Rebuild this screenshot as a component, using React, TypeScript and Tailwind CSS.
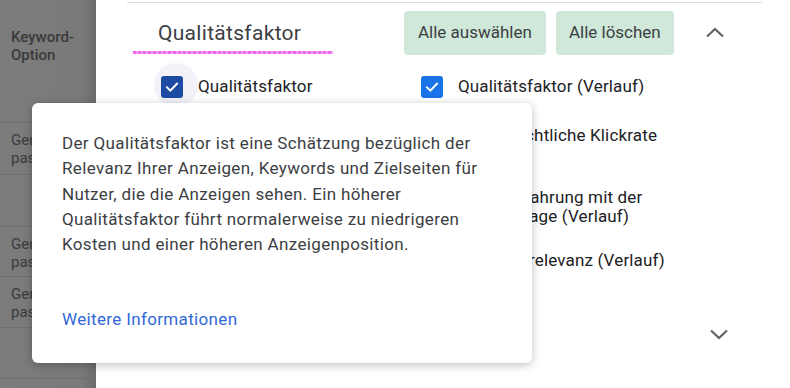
import React from "react";

const CheckIcon = () => (
  <svg viewBox="0 0 24 24" className="w-[16px] h-[16px]" fill="none">
    <path d="M4.5 12.5l5 5 10-10.5" stroke="white" strokeWidth="3" strokeLinecap="square" />
  </svg>
);

const Checkbox = ({ dark = false }: { dark?: boolean }) => (
  <div
    className={`w-[22px] h-[22px] rounded-[3px] flex items-center justify-center shrink-0 ${
      dark ? "bg-[#1d4aa3]" : "bg-[#1a73e8]"
    }`}
  >
    <CheckIcon />
  </div>
);

const Option = ({ label, dark = false, ripple = false }: { label: string; dark?: boolean; ripple?: boolean }) => (
  <div className="flex items-start gap-[15px]">
    <div className="relative w-[22px] h-[22px] shrink-0">
      {ripple && <div className="absolute -left-[7px] -top-[13px] w-[44px] h-[44px] rounded-full bg-[#f3f2f8]" />}
      <div className="relative">
        <Checkbox dark={dark} />
      </div>
    </div>
    <span className="text-[17px] leading-[19px] tracking-[0.15px] text-[#202124] max-w-[212px] pt-[1px]">{label}</span>
  </div>
);

const Chevron = ({ up = false }: { up?: boolean }) => (
  <svg viewBox="0 0 24 24" className="w-[24px] h-[24px]" fill="none">
    <path
      d={up ? "M4 15.5l8-7.5 8 7.5" : "M4 8.5l8 7.5 8-7.5"}
      stroke="#5f6368"
      strokeWidth="2.2"
    />
  </svg>
);

const panelRows = [
  { h: "h-[52px]", text: "Genau passend" },
  { h: "h-[52px]", text: "" },
  { h: "h-[50px]", text: "Genau passend" },
  { h: "h-[51px]", text: "Genau passend" },
  { h: "h-[51px]", text: "" },
  { h: "h-[51px]", text: "" },
];

export default function App() {
  return (
    <div className="relative w-[790px] h-[388px] overflow-hidden flex bg-white font-['Roboto',sans-serif]">
      {/* dimmed table behind the sheet */}
      <aside className="w-[96px] shrink-0 bg-gradient-to-r from-[#7c7c7c] via-[#7a7a7a] via-85% to-[#6b6b6b] text-[#3a3a3a] text-[15px] leading-[18px]">
        <div className="h-[123px] pl-[11px] pt-[28px] font-medium border-b border-[#6f6f6f]">
          Keyword-
          <br />
          Option
        </div>
        {panelRows.map((r, i) => (
          <div key={i} className={`${r.h} pl-[11px] pt-[8px] border-b border-[#6f6f6f] pr-2`}>
            {r.text}
          </div>
        ))}
      </aside>

      <main className="flex-1 flex flex-col">
        <div className="ml-[31px] w-[635px] h-px bg-[#dadce0] mt-[2px]" />

        <div className="flex items-start mt-[8px]">
          <div className="w-[308px] pl-[37px]">
            <div className="pl-[25px] pt-[10px] text-[21px] leading-[24px] tracking-[0.3px] text-[#3c4043]">
              Qualitätsfaktor
            </div>
            <div className="w-[200px] h-[3px] mt-[6px] bg-[repeating-linear-gradient(90deg,#f067ec_0,#f067ec_3px,#f59af2_3px,#f59af2_5px)]" />
          </div>
          <button className="h-[44px] px-[14px] rounded-[4px] bg-[#cfe8d9] text-[17px] text-[#3c4043]">
            Alle auswählen
          </button>
          <button className="h-[44px] px-[13px] ml-[10px] rounded-[4px] bg-[#cfe8d9] text-[17px] text-[#3c4043]">
            Alle löschen
          </button>
          <div className="ml-[29px] mt-[10px]">
            <Chevron up />
          </div>
        </div>

        <div className="grid grid-cols-[260px_260px] grid-rows-[49px_62px_63px_40px] pl-[65px] mt-[21px]">
          <Option label="Qualitätsfaktor" dark ripple />
          <Option label="Qualitätsfaktor (Verlauf)" />
          <Option label="Voraussichtliche Klickrate" />
          <Option label="Voraussichtliche Klickrate" />
          <Option label="Erfahrung mit der Landingpage" />
          <Option label="Nutzererfahrung mit der Landingpage (Verlauf)" />
          <Option label="Anzeigenrelevanz" />
          <Option label="Anzeigenrelevanz (Verlauf)" />
        </div>

        <div className="flex justify-start pl-[611px] mt-[32px]">
          <Chevron />
        </div>
      </main>

      {/* info popover */}
      <div className="absolute left-[32px] top-[103px] w-[500px] h-[260px] bg-white rounded-[6px] shadow-[0_2px_10px_rgba(0,0,0,0.25)] pl-[30px] pr-[20px] pt-[28px] text-[#3c4043]">
        <p className="text-[17px] leading-[25.3px] tracking-[0.35px] w-[440px]">
          Der Qualitätsfaktor ist eine Schätzung bezüglich der Relevanz Ihrer Anzeigen, Keywords und Zielseiten für
          Nutzer, die die Anzeigen sehen. Ein höherer Qualitätsfaktor führt normalerweise zu niedrigeren Kosten und
          einer höheren Anzeigenposition.
        </p>
        <a className="block mt-[50px] text-[17px] leading-[25px] text-[#3367d6] tracking-[0.35px]">Weitere Informationen</a>
      </div>
    </div>
  );
}
